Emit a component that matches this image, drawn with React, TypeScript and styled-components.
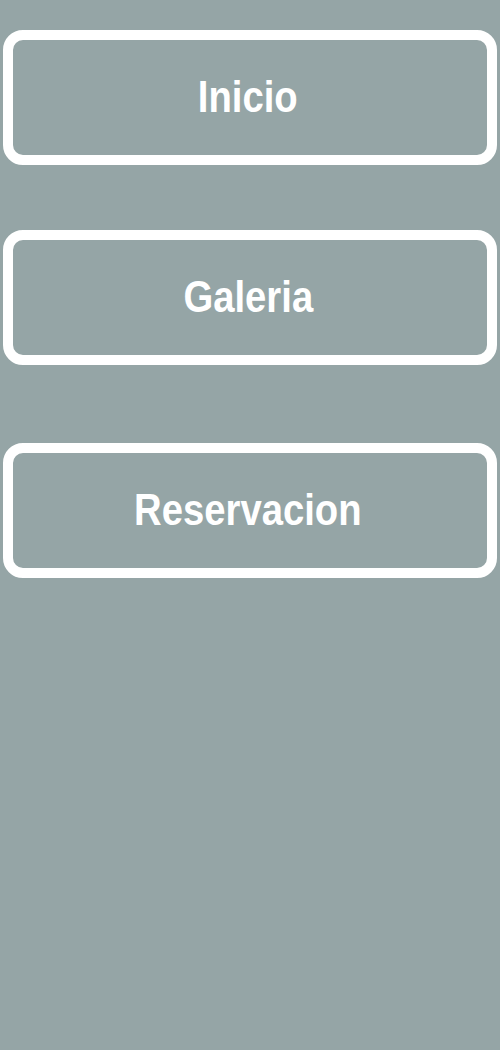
import React from "react";
import styled, { createGlobalStyle } from "styled-components";

const GlobalStyle = createGlobalStyle`
  html, body {
    margin: 0;
    padding: 0;
    background: #95a5a6;
  }
  body {
    min-height: 1050px;
    font-family: "Liberation Sans", Arial, sans-serif;
  }
`;

const Nav = styled.nav`
  display: flex;
  flex-direction: column;
  padding: 30px 3px 0 3px;
`;

const NavButton = styled.a<{ $offset: number }>`
  display: flex;
  align-items: center;
  justify-content: center;
  box-sizing: border-box;
  height: 135px;
  margin-top: ${(p) => p.$offset}px;
  border: 10px solid #ffffff;
  border-radius: 20px;
  color: #ffffff;
  text-decoration: none;
  cursor: pointer;
`;

const Label = styled.span`
  display: inline-block;
  font-family: "Liberation Sans", Arial, sans-serif;
  font-weight: 700;
  font-size: 45px;
  line-height: 1;
  transform: scaleX(0.85);
  margin: -3px 4px 0 0;
`;

const items = [
  { label: "Inicio", offset: 0 },
  { label: "Galeria", offset: 65 },
  { label: "Reservacion", offset: 78 },
];

export default function App() {
  return (
    <>
      <GlobalStyle />
      <Nav>
        {items.map((it) => (
          <NavButton key={it.label} $offset={it.offset}>
            <Label>{it.label}</Label>
          </NavButton>
        ))}
      </Nav>
    </>
  );
}
